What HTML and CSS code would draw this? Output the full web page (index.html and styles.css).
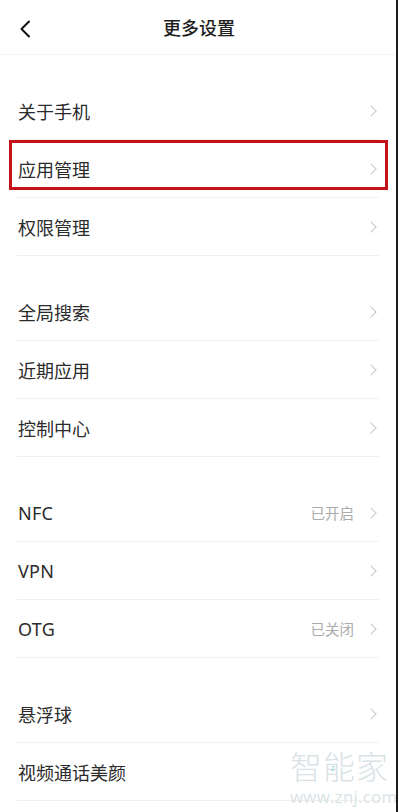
FILE: index.html
```html
<!DOCTYPE html>
<html lang="zh-CN">
<head>
  <meta charset="UTF-8" />
  <title>更多设置</title>
  <link rel="stylesheet" href="styles.css">
</head>
<body>
  <div class="screen">

    <div class="header">
      <span class="back">
        <svg width="12" height="18" viewBox="0 0 12 18"><path d="M10 1.5 L2.5 9 L10 16.5" fill="none" stroke="#111" stroke-width="2" stroke-linecap="round" stroke-linejoin="round"/></svg>
      </span>
      <h1>更多设置</h1>
      <span></span>
    </div>

    <div class="group">
      <div class="row"><span class="label">关于手机</span><span class="arrow"></span></div>
      <div class="row marked"><span class="label">应用管理</span><span class="arrow"></span></div>
      <div class="row"><span class="label">权限管理</span><span class="arrow"></span></div>
    </div>

    <div class="group">
      <div class="row"><span class="label">全局搜索</span><span class="arrow"></span></div>
      <div class="row"><span class="label">近期应用</span><span class="arrow"></span></div>
      <div class="row"><span class="label">控制中心</span><span class="arrow"></span></div>
    </div>

    <div class="group">
      <div class="row"><span class="label latin">NFC</span><span class="value">已开启</span><span class="arrow"></span></div>
      <div class="row"><span class="label latin">VPN</span><span class="arrow"></span></div>
      <div class="row"><span class="label latin">OTG</span><span class="value">已关闭</span><span class="arrow"></span></div>
    </div>

    <div class="group">
      <div class="row"><span class="label">悬浮球</span><span class="arrow"></span></div>
      <div class="row"><span class="label">视频通话美颜</span></div>
    </div>

    <div class="watermark">
      <div class="wm-name">智能家<span class="wm-z">z</span></div>
      <div class="wm-url">www.znj.com</div>
    </div>

  </div>
</body>
</html>
```

FILE: styles.css
```css
body {
  margin: 0;
  background: #fff;
  font-family: "Noto Sans", "Noto Sans CJK SC", sans-serif;
  color: #2b2b2b;
}
.screen {
  position: relative;
  width: 396px;
  min-height: 812px;
  border-right: 2px solid #1c1c1c;
  background: #fff;
  overflow: hidden;
}

/* top bar */
.header {
  display: grid;
  grid-template-columns: 56px 1fr 56px;
  align-items: center;
  height: 55px;
  border-bottom: 1px solid #f3f3f3;
  box-sizing: border-box;
}
.back { display: flex; padding-left: 19px; padding-top: 3px; }
.header h1 {
  margin: 0;
  text-align: center;
  font-size: 18px;
  font-weight: 500;
  color: #1e1e1e;
  padding-left: 2px;
}

/* list */
.group { margin-top: 27px; }
.row {
  position: relative;
  display: flex;
  align-items: center;
  height: 58px;
  margin: 0 17px 0 17px;
  border-bottom: 1px solid #f0f0f0;
  box-sizing: border-box;
}
.label {
  flex: 1;
  font-size: 18px;
  padding-left: 1px;
}
.label.latin { letter-spacing: 0.3px; }
.value {
  font-size: 14.5px;
  color: #ababab;
  margin-right: 13px;
}
.arrow {
  width: 7px;
  height: 7px;
  border-top: 1.4px solid #c9c9c9;
  border-right: 1.4px solid #c9c9c9;
  transform: rotate(45deg);
  margin-right: 4px;
  margin-top: 1px;
}

/* red highlight frame */
.row.marked::after {
  content: "";
  position: absolute;
  top: 0;
  left: -8px;
  right: -9px;
  height: 50px;
  border: 3px solid #c4121b;
  box-sizing: border-box;
}

/* watermark */
.watermark {
  position: absolute;
  left: 290px;
  top: 750px;
  color: #d9e3e6;
  font-family: "Noto Sans CJK SC", sans-serif;
}
.wm-name {
  position: relative;
  font-size: 32px;
  font-weight: 300;
  line-height: 30px;
  letter-spacing: 1px;
}
.wm-z {
  position: absolute;
  left: 41px;
  top: 14px;
  font-size: 8px;
  line-height: 8px;
  color: #63c7d6;
}
.wm-url {
  font-family: "Open Sans", sans-serif;
  font-size: 17px;
  line-height: 20px;
  margin-top: 7px;
  letter-spacing: 0.2px;
}
```
